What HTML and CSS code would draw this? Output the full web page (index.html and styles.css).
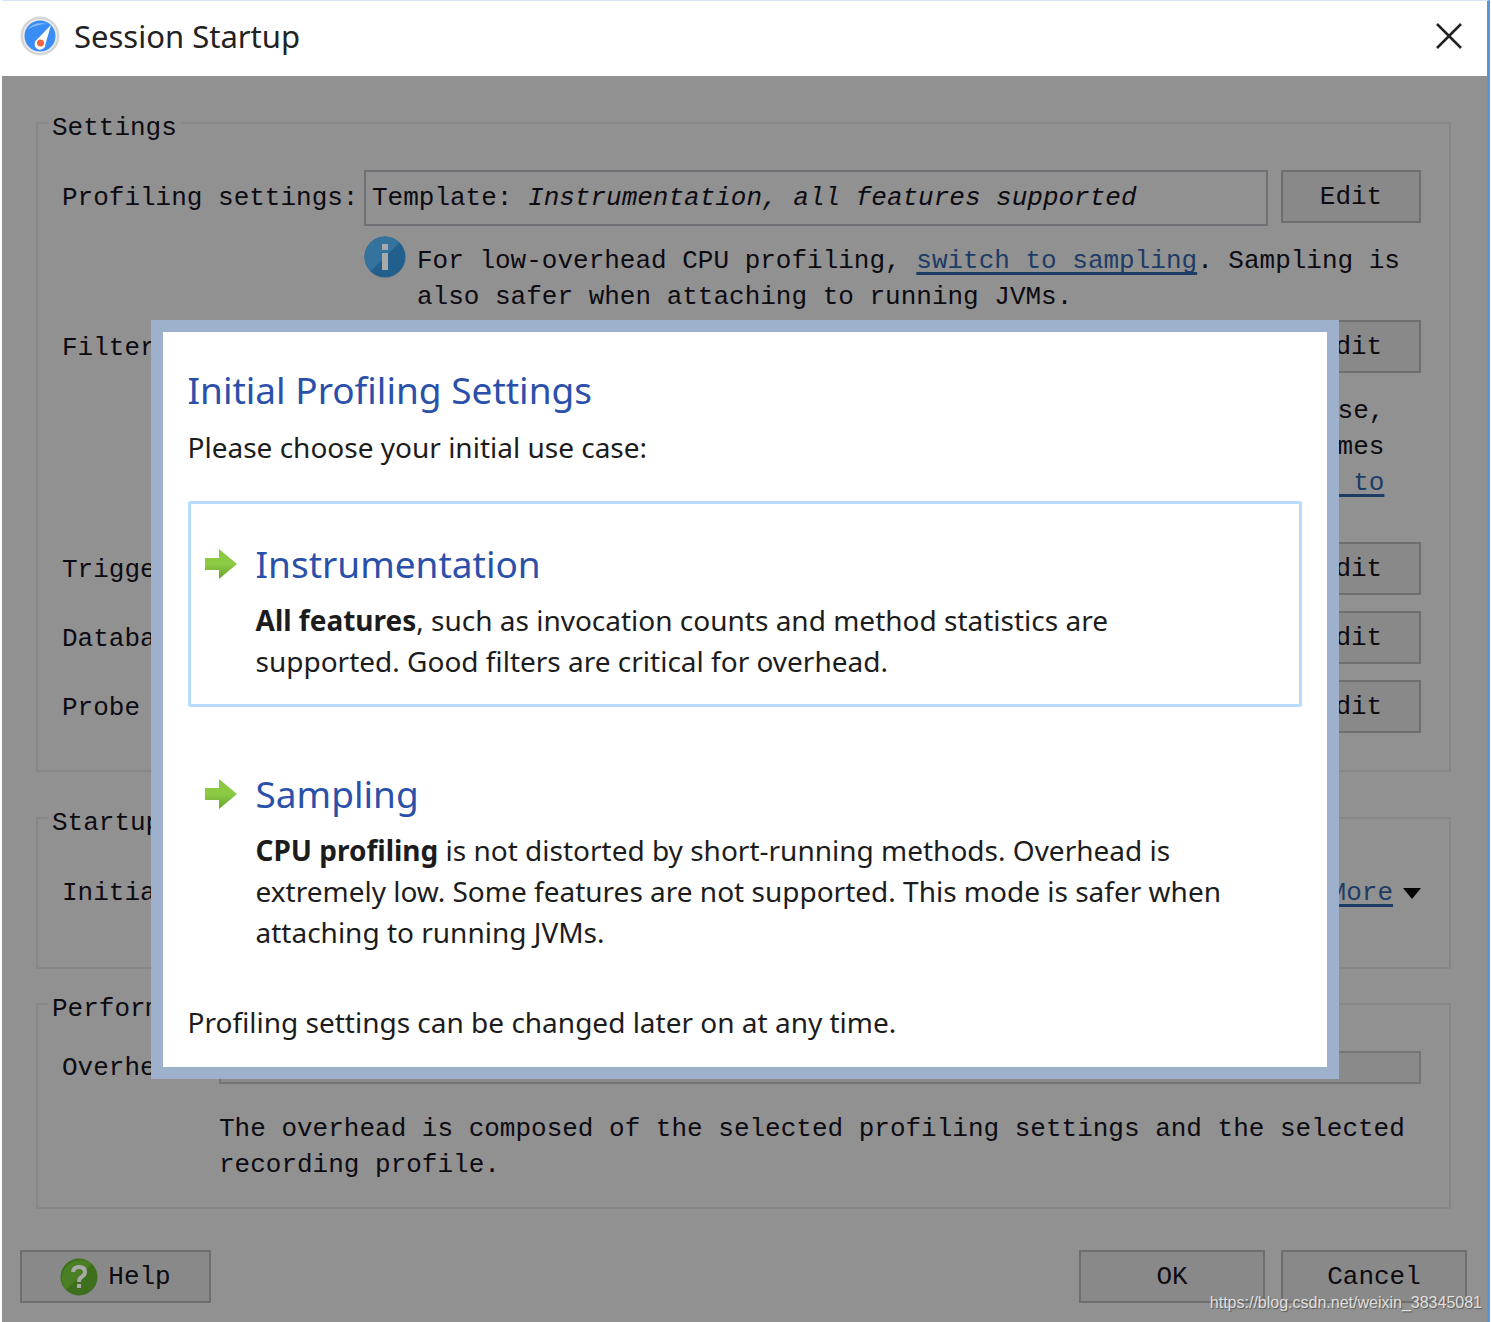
FILE: index.html
```html
<!DOCTYPE html>
<html lang="en">
<head>
    <meta charset="UTF-8">
    <meta name="viewport" content="width=device-width, initial-scale=1.0">
    <title>Session Startup</title>
    <link rel="stylesheet" href="styles.css">
</head>
<body>
    <div class="window">
        <header class="titlebar">
            <svg class="app-icon" viewBox="0 0 40 40">
                <circle cx="20" cy="20" r="19.5" fill="#d6d6d6"/>
                <circle cx="20" cy="20" r="17" fill="#ececec"/>
                <circle cx="20" cy="20" r="15.5" fill="#3a8df5"/>
                <path d="M8 13 Q15 5 27 8 Q18 8 8 13Z" fill="#8fc1ff"/>
                <path d="M31 9 L25.5 28 A5.5 5.5 0 1 1 15.5 25Z" fill="#fff"/>
                <circle cx="20.5" cy="27" r="3.5" fill="#f0633c"/>
            </svg>
            <h1>Session Startup</h1>
            <button class="close" aria-label="Close">
                <svg viewBox="0 0 28 28"><path d="M2 2 L26 26 M26 2 L2 26" stroke="#222" stroke-width="2.5" fill="none"/></svg>
            </button>
        </header>

        <main>
            <fieldset>
                <legend>Settings</legend>
                <div class="row">
                    <span class="label">Profiling settings:</span>
                    <div class="field">Template: <em>Instrumentation, all features supported</em></div>
                    <button class="btn">Edit</button>
                </div>
                <div class="hint">
                    <svg class="info-icon" viewBox="0 0 42 42">
                        <circle cx="21" cy="21" r="20.5" fill="#235f8c"/>
                        <path d="M6.5 35.5 A20.5 20.5 0 0 1 35.5 6.5Z" fill="#33739d"/>
                        <rect x="18" y="8" width="6" height="6" fill="#a9a9a9"/>
                        <rect x="18" y="17" width="6" height="17" fill="#a9a9a9"/>
                    </svg>
                    <p>For low-overhead CPU profiling, <a href="#">switch to sampling</a>. Sampling is also safer when attaching to running JVMs.</p>
                </div>
                <div class="row">
                    <span class="label">Filter settings:</span>
                    <div class="field"></div>
                    <button class="btn">Edit</button>
                </div>
                <div class="hint">
                    <svg class="info-icon" viewBox="0 0 42 42">
                        <circle cx="21" cy="21" r="20.5" fill="#235f8c"/>
                        <rect x="18" y="8" width="6" height="6" fill="#a9a9a9"/>
                        <rect x="18" y="17" width="6" height="17" fill="#a9a9a9"/>
                    </svg>
                    <p>All classes are profiled by default. To define your code base, please add packages for your own classes so that package names are not filtered from the call tree. <a href="#">Use the filters wizard to set them up.</a></p>
                </div>
                <div class="row">
                    <span class="label">Trigger settings:</span>
                    <div class="field"></div>
                    <button class="btn">Edit</button>
                </div>
                <div class="row">
                    <span class="label">Database settings:</span>
                    <div class="field"></div>
                    <button class="btn">Edit</button>
                </div>
                <div class="row">
                    <span class="label">Probe settings:</span>
                    <div class="field"></div>
                    <button class="btn">Edit</button>
                </div>
            </fieldset>

            <fieldset class="startup">
                <legend>Startup</legend>
                <div class="row">
                    <label class="label" for="profile">Initial profile:</label>
                    <select class="field" id="profile"></select>
                    <div class="more">
                        <a href="#">More</a>
                        <svg viewBox="0 0 18 11"><path d="M0 0 H18 L9 11Z" fill="#050505"/></svg>
                    </div>
                </div>
            </fieldset>

            <fieldset class="performance">
                <legend>Performance</legend>
                <div class="overhead">
                    <label for="overhead">Overhead:</label>
                    <progress id="overhead" value="0" max="100"></progress>
                    <p>The overhead is composed of the selected profiling settings and the selected recording profile.</p>
                </div>
            </fieldset>

            <div class="actions">
                <button class="btn help">
                    <svg viewBox="0 0 38 38">
                        <circle cx="19" cy="19" r="18.5" fill="#3d6f1c"/>
                        <path d="M6 32 A18.5 18.5 0 0 1 32 6Z" fill="#4a7f23"/>
                        <path d="M13 14 Q13.5 9 19 9 Q25 9 25 14 Q25 17 21.5 19 Q19 20.5 19 24" fill="none" stroke="#a9a9a9" stroke-width="4"/>
                        <rect x="17" y="26" width="4" height="4" fill="#a9a9a9"/>
                    </svg>
                    Help
                </button>
                <button class="btn">OK</button>
                <button class="btn">Cancel</button>
            </div>

            <!-- First run popup -->
            <section class="modal">
                <h2>Initial Profiling Settings</h2>
                <p>Please choose your initial use case:</p>
                <button class="option selected">
                    <svg class="arrow" viewBox="0 0 32 32">
                        <defs>
                            <linearGradient id="green" x1="0" y1="0" x2="0" y2="1">
                                <stop offset="0" stop-color="#8cc63f"/>
                                <stop offset="0.5" stop-color="#8ccb45"/>
                                <stop offset="1" stop-color="#68a22c"/>
                            </linearGradient>
                        </defs>
                        <path d="M0 10 H14 V1 L32 16 L14 31 V22 H0Z" fill="url(#green)"/>
                    </svg>
                    <span class="option-text">
                        <span class="option-title">Instrumentation</span>
                        <span class="option-desc"><b>All features</b>, such as invocation counts and method statistics are supported. Good filters are critical for overhead.</span>
                    </span>
                </button>
                <button class="option">
                    <svg class="arrow" viewBox="0 0 32 32">
                        <path d="M0 10 H14 V1 L32 16 L14 31 V22 H0Z" fill="url(#green)"/>
                    </svg>
                    <span class="option-text">
                        <span class="option-title">Sampling</span>
                        <span class="option-desc"><b>CPU profiling</b> is not distorted by short-running methods. Overhead is extremely low. Some features are not supported. This mode is safer when attaching to running JVMs.</span>
                    </span>
                </button>
                <p>Profiling settings can be changed later on at any time.</p>
            </section>
        </main>
        <div class="watermark">https://blog.csdn.net/weixin_38345081</div>
    </div>
</body>
</html>
```
FILE: styles.css
```css
* {
    box-sizing: border-box;
}

body {
    margin: 0;
    background: #fff;
    font-family: "Liberation Mono", monospace;
    font-size: 26px;
    color: #0d0b12;
}

h1, h2, p {
    margin: 0;
    font-weight: normal;
}

.window {
    position: relative;
    display: flex;
    flex-direction: column;
    min-height: 100vh;
    margin: 0 2px;
    border-top: 1px solid #d5e5f7;
    border-right: 3px solid #5a96d8;
}

.titlebar {
    display: flex;
    align-items: center;
    gap: 14px;
    height: 75px;
    padding: 0 24px 6px 18px;
    background: #fff;
}

.titlebar h1 {
    flex: 1;
    font-family: "Noto Sans", sans-serif;
    font-size: 31px;
    color: #222;
}

.app-icon {
    width: 40px;
    height: 40px;
}

.close {
    display: flex;
    padding: 0;
    border: 0;
    background: none;
}

.close svg {
    width: 28px;
    height: 28px;
}

main {
    position: relative;
    flex: 1;
    padding: 27px 36px 18px 34px;
    background: #919191;
}

a {
    color: #1d3c66;
    text-decoration-thickness: 3px;
    text-underline-offset: 4px;
    text-decoration-skip-ink: none;
}

/* Group boxes */
fieldset {
    min-width: 0;
    margin: 0 0 26px;
    padding: 27px 28px 34px 10px;
    border: 2px solid #878787;
}

legend {
    padding: 10px 4px 0;
    line-height: 30px;
}

.row {
    display: grid;
    grid-template-columns: 289px 1fr 140px;
    gap: 13px;
    padding-left: 14px;
}

.row + .row {
    margin-top: 13px;
}

.label {
    align-self: center;
    white-space: nowrap;
}

.field {
    height: 56px;
    padding: 0 6px;
    border: 2px solid #6f6f76;
    background: none;
    font: inherit;
    line-height: 52px;
    white-space: nowrap;
}

.btn {
    height: 53px;
    padding: 0;
    border: 2px solid #6e6e6e;
    background: #898989;
    font: inherit;
    color: inherit;
}

.hint {
    display: flex;
    gap: 11px;
    margin: 10px 0 5px;
    padding-left: 316px;
}

.hint p {
    flex: 1;
    padding-top: 7px;
    line-height: 36px;
}

.info-icon {
    width: 42px;
    height: 42px;
}

.startup {
    margin-bottom: 15px;
    padding-bottom: 46px;
}

.more {
    display: flex;
    align-items: center;
    justify-content: flex-end;
    gap: 10px;
}

.more svg {
    width: 18px;
    height: 11px;
}

.performance {
    margin-bottom: 41px;
    padding-bottom: 24px;
}

.overhead {
    display: grid;
    grid-template-columns: 144px 1fr;
    column-gap: 13px;
    row-gap: 27px;
    align-items: center;
    padding-left: 14px;
}

.overhead p {
    grid-column: 2;
    line-height: 36px;
}

progress {
    appearance: none;
    width: 100%;
    height: 33px;
    border: 2px solid #757575;
    background: #8a8a8a;
}

progress::-webkit-progress-bar {
    background: #8a8a8a;
}

.actions {
    display: flex;
    gap: 16px;
    margin: 0 -16px;
}

.actions .btn {
    width: 186px;
}

.actions .help {
    display: flex;
    align-items: center;
    justify-content: center;
    gap: 10px;
    width: 191px;
    margin-right: auto;
}

.help svg {
    width: 38px;
    height: 38px;
}

/* Popup */
.modal {
    position: absolute;
    top: 244px;
    left: 10%;
    right: 10%;
    padding: 33px 25px 24px;
    border: 12px solid #9db1cd;
    background: #fff;
    font-family: "Noto Sans", sans-serif;
    font-size: 28px;
    line-height: 41px;
    color: #1c1c1c;
}

.modal h2 {
    margin-bottom: 12px;
    font-size: 37px;
    line-height: 50px;
    color: #2b50aa;
}

.option {
    display: flex;
    gap: 19px;
    width: 100%;
    margin: 23px 0 24px;
    padding: 35px 44px 22px 14px;
    border: 3px solid transparent;
    background: none;
    font: inherit;
    color: inherit;
    text-align: left;
}

.selected {
    margin-top: 33px;
    border-color: #b8dcff;
    border-radius: 2px;
}

.arrow {
    flex: none;
    width: 32px;
    height: 32px;
    margin-top: 9px;
}

.option-text, .option-title, .option-desc {
    display: block;
}

.option-title {
    margin-bottom: 11px;
    font-size: 37px;
    line-height: 50px;
    color: #2b50aa;
}

.watermark {
    position: absolute;
    right: 5px;
    bottom: 10px;
    font-family: "Liberation Sans", sans-serif;
    font-size: 16px;
    color: #e0e0e0;
    text-shadow: 1px 1px 1px #555;
}
```
